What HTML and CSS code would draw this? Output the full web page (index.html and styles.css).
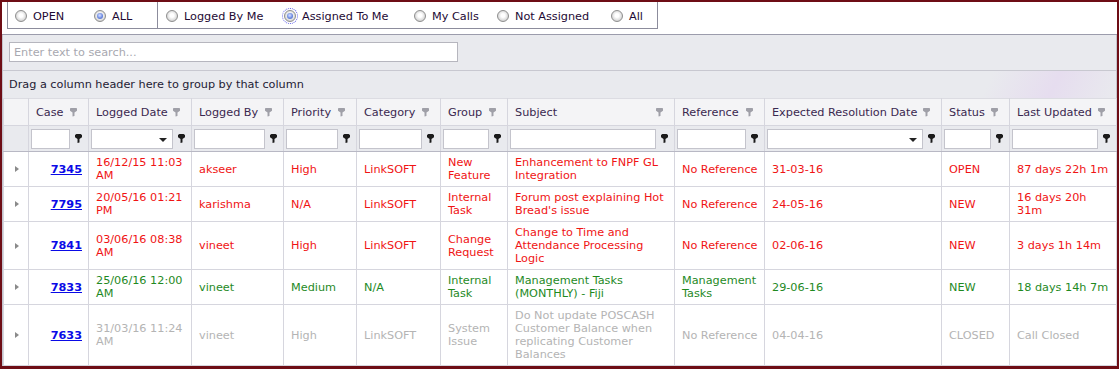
FILE: index.html
```html
<!DOCTYPE html>
<html lang="en">
<head>
    <meta charset="UTF-8">
    <title>Calls</title>
    <link rel="stylesheet" href="styles.css">
</head>
<body>
<div class="frame">
    <div class="topbar">
        <div class="rgroup first">
            <label class="opt"><span class="radio"></span>OPEN</label>
            <label class="opt"><span class="radio on"></span>ALL</label>
        </div>
        <div class="rgroup second">
            <label class="opt"><span class="radio"></span>Logged By Me</label>
            <label class="opt"><span class="radio on focus"></span>Assigned To Me</label>
            <label class="opt"><span class="radio"></span>My Calls</label>
            <label class="opt"><span class="radio"></span>Not Assigned</label>
            <label class="opt"><span class="radio"></span>All</label>
        </div>
    </div>

    <div class="panel">
        <div class="searchrow">
            <input type="text" class="search" placeholder="Enter text to search...">
        </div>
        <div class="grouparea">Drag a column header here to group by that column</div>

        <table class="grid">
            <colgroup>
                <col style="width:25px"><col style="width:60px"><col style="width:103px"><col style="width:92px">
                <col style="width:73px"><col style="width:84px"><col style="width:67px"><col style="width:167px">
                <col style="width:90px"><col style="width:177px"><col style="width:68px"><col style="width:107px">
            </colgroup>
            <thead>
                <tr class="hdr">
                    <th></th>
                    <th><div class="hc"><span>Case</span><i class="fn"></i></div></th>
                    <th><div class="hc"><span>Logged Date</span><i class="fn"></i></div></th>
                    <th><div class="hc"><span>Logged By</span><i class="fn"></i></div></th>
                    <th><div class="hc"><span>Priority</span><i class="fn"></i></div></th>
                    <th><div class="hc"><span>Category</span><i class="fn"></i></div></th>
                    <th><div class="hc"><span>Group</span><i class="fn"></i></div></th>
                    <th><div class="hc"><span>Subject</span><i class="fn"></i></div></th>
                    <th><div class="hc"><span>Reference</span><i class="fn"></i></div></th>
                    <th><div class="hc"><span>Expected Resolution Date</span><i class="fn"></i></div></th>
                    <th><div class="hc"><span>Status</span><i class="fn"></i></div></th>
                    <th><div class="hc"><span>Last Updated</span><i class="fn"></i></div></th>
                </tr>
                <tr class="flt">
                    <td></td>
                    <td><div class="fc"><span class="box"></span><i class="fn dark"></i></div></td>
                    <td><div class="fc"><span class="box drop"></span><i class="fn dark"></i></div></td>
                    <td><div class="fc"><span class="box"></span><i class="fn dark"></i></div></td>
                    <td><div class="fc"><span class="box"></span><i class="fn dark"></i></div></td>
                    <td><div class="fc"><span class="box"></span><i class="fn dark"></i></div></td>
                    <td><div class="fc"><span class="box"></span><i class="fn dark"></i></div></td>
                    <td><div class="fc"><span class="box"></span><i class="fn dark"></i></div></td>
                    <td><div class="fc"><span class="box"></span><i class="fn dark"></i></div></td>
                    <td><div class="fc"><span class="box drop"></span><i class="fn dark"></i></div></td>
                    <td><div class="fc"><span class="box"></span><i class="fn dark"></i></div></td>
                    <td><div class="fc"><span class="box"></span><i class="fn dark"></i></div></td>
                </tr>
            </thead>
            <tbody>
                <tr class="red">
                    <td class="exp"><span class="arrow"></span></td>
                    <td class="case"><a href="#">7345</a></td>
                    <td>16/12/15 11:03 AM</td>
                    <td>akseer</td>
                    <td>High</td>
                    <td>LinkSOFT</td>
                    <td>New Feature</td>
                    <td>Enhancement to FNPF GL Integration</td>
                    <td>No Reference</td>
                    <td>31-03-16</td>
                    <td>OPEN</td>
                    <td>87 days 22h 1m</td>
                </tr>
                <tr class="red">
                    <td class="exp"><span class="arrow"></span></td>
                    <td class="case"><a href="#">7795</a></td>
                    <td>20/05/16 01:21 PM</td>
                    <td>karishma</td>
                    <td>N/A</td>
                    <td>LinkSOFT</td>
                    <td>Internal Task</td>
                    <td>Forum post explaining Hot Bread's issue</td>
                    <td>No Reference</td>
                    <td>24-05-16</td>
                    <td>NEW</td>
                    <td>16 days 20h 31m</td>
                </tr>
                <tr class="red">
                    <td class="exp"><span class="arrow"></span></td>
                    <td class="case"><a href="#">7841</a></td>
                    <td>03/06/16 08:38 AM</td>
                    <td>vineet</td>
                    <td>High</td>
                    <td>LinkSOFT</td>
                    <td>Change Request</td>
                    <td>Change to Time and Attendance Processing Logic</td>
                    <td>No Reference</td>
                    <td>02-06-16</td>
                    <td>NEW</td>
                    <td>3 days 1h 14m</td>
                </tr>
                <tr class="green">
                    <td class="exp"><span class="arrow"></span></td>
                    <td class="case"><a href="#">7833</a></td>
                    <td>25/06/16 12:00 AM</td>
                    <td>vineet</td>
                    <td>Medium</td>
                    <td>N/A</td>
                    <td>Internal Task</td>
                    <td>Management Tasks (MONTHLY) - Fiji</td>
                    <td>Management Tasks</td>
                    <td>29-06-16</td>
                    <td>NEW</td>
                    <td>18 days 14h 7m</td>
                </tr>
                <tr class="grey">
                    <td class="exp"><span class="arrow"></span></td>
                    <td class="case"><a href="#">7633</a></td>
                    <td>31/03/16 11:24 AM</td>
                    <td>vineet</td>
                    <td>High</td>
                    <td>LinkSOFT</td>
                    <td>System Issue</td>
                    <td>Do Not update POSCASH Customer Balance when replicating Customer Balances</td>
                    <td>No Reference</td>
                    <td>04-04-16</td>
                    <td>CLOSED</td>
                    <td>Call Closed</td>
                </tr>
            </tbody>
        </table>
    </div>
</div>
</body>
</html>
```

FILE: styles.css
```css
* {
    box-sizing: border-box;
}
body {
    margin: 0;
    font-family: "DejaVu Sans", Verdana, sans-serif;
    font-size: 11.25px;
    color: #2a1a3c;
}
.frame {
    width: 1119px;
    height: 369px;
    border: 2px solid #6e0d15;
    border-bottom-width: 3px;
    overflow: hidden;
    background: #fff;
}

/* radio bar */
.topbar {
    display: flex;
    height: 33px;
    padding-left: 5px;
    border-bottom: 1px solid #9c9cac;
    background: #fff;
}
.rgroup {
    display: flex;
    align-items: center;
    height: 27px;
    padding-top: 2px;
    border: 1px solid #8c8c9c;
    border-top: none;
}
.rgroup.first {
    width: 151px;
    padding-left: 7px;
}
.rgroup.first .opt:first-child {
    width: 79px;
}
.rgroup.second {
    width: 500px;
    border-left: none;
    padding-left: 8px;
}
.rgroup.second .opt:nth-child(1) { width: 118px; }
.rgroup.second .opt:nth-child(2) { width: 130px; }
.rgroup.second .opt:nth-child(3) { width: 83px; }
.rgroup.second .opt:nth-child(4) { width: 114px; }
.opt {
    display: flex;
    align-items: center;
    gap: 6px;
    color: #1e0a34;
}
.radio {
    display: inline-block;
    flex: none;
    width: 12px;
    height: 12px;
    border-radius: 50%;
    border: 1px solid #8e8e8e;
    background: radial-gradient(circle at 50% 45%, #ffffff 25%, #e4e4e4 55%, #b8b8b8 100%);
    position: relative;
}
.radio.on::after {
    content: "";
    position: absolute;
    left: 2px;
    top: 2px;
    width: 6px;
    height: 6px;
    border-radius: 50%;
    background: radial-gradient(circle at 45% 40%, #c9d6ff 10%, #6d8ae0 55%, #3a56b8 100%);
}
.radio.focus {
    outline: 1px dotted #5a5ae6;
    outline-offset: 1px;
}

/* search / group panel */
.panel {
    background: #e9eaee;
    border-left: 1px solid #c4c4cc;
    border-right: 1px solid #c4c4cc;
    height: 100%;
}
.searchrow {
    padding: 7px 0 8px 6px;
    border-bottom: 1px solid #c8c8d0;
}
.search {
    display: block;
    width: 449px;
    height: 20px;
    margin: 0;
    border: 1px solid #b6b6be;
    padding: 0 4px;
    font-family: "DejaVu Sans", Verdana, sans-serif;
    font-size: 11.25px;
    background: #fff;
}
.search::placeholder {
    color: #a8a8b0;
}
.grouparea {
    height: 27px;
    line-height: 28px;
    padding-left: 6px;
    color: #241a34;
    background: linear-gradient(115deg, #e9eaee 88%, #e6ddef 94%, #e9eaee 100%);
}

/* grid */
.grid {
    width: 1113px;
    table-layout: fixed;
    border-collapse: collapse;
}
.grid th, .grid td {
    border: 1px solid #d6d6de;
    padding: 4px 6px 4px 7px;
    line-height: 13px;
    text-align: left;
    vertical-align: middle;
    font-weight: normal;
}
.hdr th {
    height: 27px;
    background: #f4f4f6;
    color: #3a2850;
    border-top-color: #dcdce2;
    padding-right: 11px;
}
.hc {
    display: flex;
    justify-content: space-between;
    align-items: center;
    white-space: nowrap;
}
.flt td {
    height: 26px;
    background: #e9eaee;
    padding: 2px 6px 2px 2px;
    border-bottom: 1px solid #b8b8c4;
}
.fc {
    display: flex;
    align-items: center;
    gap: 5px;
}
.box {
    flex: 1;
    height: 20px;
    background: #fff;
    border: 1px solid #c4c4cc;
    position: relative;
}
.box.drop::after {
    content: "";
    position: absolute;
    right: 5px;
    top: 8px;
    border-left: 4px solid transparent;
    border-right: 4px solid transparent;
    border-top: 4px solid #222;
}
.fn {
    display: inline-block;
    width: 7px;
    height: 9px;
    flex: none;
    background: #a0a0a8;
    clip-path: polygon(0 10%, 20% 0, 80% 0, 100% 10%, 100% 35%, 64% 55%, 64% 95%, 36% 100%, 36% 55%, 0 35%);
}
.fn.dark {
    background: #1a1a1a;
}

tbody td {
    background: #fff;
}
tbody tr.red td { color: #f01414; }
tbody tr.green td { color: #1f8a1f; }
tbody tr.grey td { color: #b4b4b4; }
.grid td.exp {
    padding-left: 11px;
}
.arrow {
    display: block;
    width: 0;
    height: 0;
    border-top: 3px solid transparent;
    border-bottom: 3px solid transparent;
    border-left: 4px solid #8a8a8a;
}
.grid td.case {
    text-align: right;
}
.case a {
    color: #0a0ae6;
    font-weight: bold;
    text-decoration: underline;
}
```
